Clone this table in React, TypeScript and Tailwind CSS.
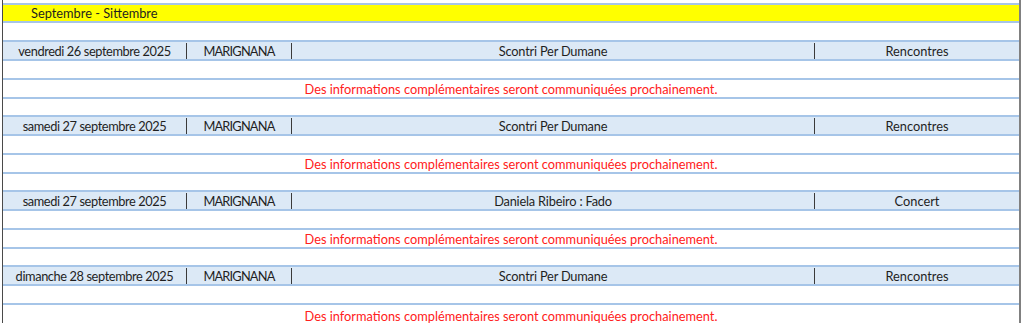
import React from "react";

type Ev = { date: string; place: string; title: string; kind: string };

const events: Ev[] = [
  { date: "vendredi 26 septembre 2025", place: "MARIGNANA", title: "Scontri Per Dumane", kind: "Rencontres" },
  { date: "samedi 27 septembre 2025", place: "MARIGNANA", title: "Scontri Per Dumane", kind: "Rencontres" },
  { date: "samedi 27 septembre 2025", place: "MARIGNANA", title: "Daniela Ribeiro : Fado", kind: "Concert" },
  { date: "dimanche 28 septembre 2025", place: "MARIGNANA", title: "Scontri Per Dumane", kind: "Rencontres" },
];

const Sep = () => <div className="w-px self-stretch mt-[1px] mb-0 bg-[#3a3a3a]" />;

function Group({ ev, last }: { ev: Ev; last: boolean }) {
  return (
    <>
      <div className="h-[19px] flex bg-[#dce9f6] border-b-2 border-[#a6c5e8]">
        <div className="w-[183px] flex items-end justify-center pb-[1px] tracking-[-0.4px]">{ev.date}</div>
        <Sep />
        <div className="w-[104px] flex items-end justify-center pb-[1px] tracking-[-0.8px]">{ev.place}</div>
        <Sep />
        <div className="w-[522px] flex items-end justify-center pb-[1px] tracking-[-0.2px]">{ev.title}</div>
        <Sep />
        <div className="flex-1 flex items-end justify-center pb-[1px]">{ev.kind}</div>
      </div>
      <div className="h-[19px] border-b-2 border-[#a6c5e8]" />
      <div className={`h-[19px] flex items-end justify-center pb-[1px] text-[#ff2020] ${last ? "" : "border-b-2 border-[#a6c5e8]"}`}>
        Des informations complémentaires seront communiquées prochainement.
      </div>
      {!last && <div className="h-[18px] border-b-2 border-[#a6c5e8]" />}
    </>
  );
}

export default function App() {
  return (
    <div
      className="w-[1024px] h-[323px] bg-white overflow-hidden text-[12.8px] text-[#1f1f1f] leading-none"
      style={{ fontFamily: "Lato, 'Open Sans', sans-serif" }}
    >
      <div className="ml-[2px] w-[1019px] h-full border-l border-r-2 border-l-[#4a4a4a] border-r-[#808080] pt-[3px]">
        <div className="h-[20px] bg-[#ffff00] border-t-2 border-b-2 border-[#a6c5e8] flex items-end pb-[1px] pl-[28px]">
          Septembre - Sittembre
        </div>
        <div className="h-[19px] border-b-2 border-[#a6c5e8]" />
        {events.map((ev, i) => (
          <Group key={i} ev={ev} last={i === events.length - 1} />
        ))}
      </div>
    </div>
  );
}
